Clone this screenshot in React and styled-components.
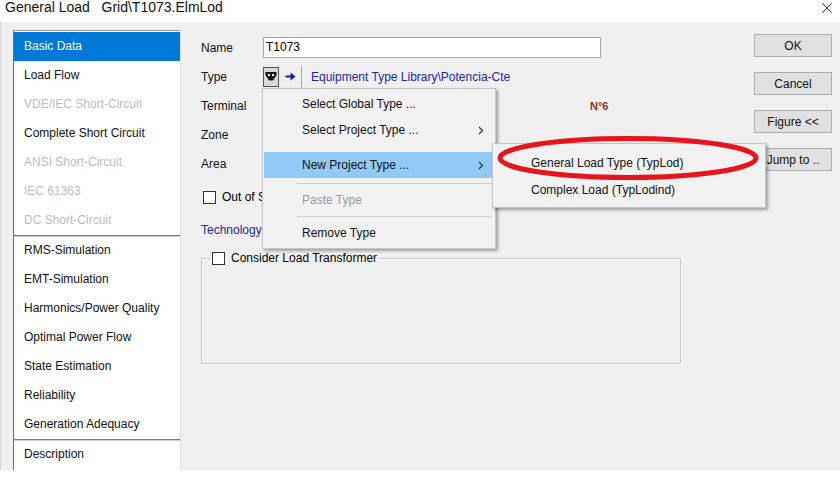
import React from "react";
import styled, { createGlobalStyle } from "styled-components";

const Global = createGlobalStyle`
  html, body { margin: 0; padding: 0; background: #ffffff; }
  body { font-family: "Liberation Sans", Arial, sans-serif; font-size: 12px; color: #000; }
  * { box-sizing: border-box; }
`;

const Window = styled.div`
  position: relative;
  width: 840px;
  height: 470px;
  display: flex;
  flex-direction: column;
`;

const TitleBar = styled.div`
  height: 22px;
  display: flex;
  justify-content: space-between;
  align-items: flex-start;
  padding: 0 8px 0 5px;
  background: #fff;
`;

const Title = styled.div`
  font-size: 14px;
  line-height: 15px;
  color: #111;
  white-space: pre;
`;

const Close = styled.div`
  padding-top: 3px;
  display: flex;
`;

const Body = styled.div`
  flex: 1;
  display: flex;
  background: #f0f0f0;
  padding: 8px 0 0 12px;
  border-left: 1px solid #d6d6d6;
`;

const Sidebar = styled.div`
  width: 168px;
  background: #fff;
  border-left: 1px solid #6e6e6e;
  border-top: 1px solid #9a9a9a;
  border-right: 1px solid #e2e2e2;
  padding-top: 1px;
  display: flex;
  flex-direction: column;
`;

const NavItem = styled.div`
  height: 29px;
  line-height: 29px;
  padding-left: 10px;
  font-size: 12px;
  white-space: nowrap;
  color: ${p => (p.$selected ? "#ffffff" : p.$disabled ? "#bdbdbd" : "#111")};
  background: ${p => (p.$selected ? "#0078d7" : "transparent")};
`;

const NavDivider = styled.div`
  height: 2px;
  background: #7a7a7a;
  border-bottom: 1px solid #d0d0d0;
  margin-bottom: -1px;
`;

const Content = styled.div`
  flex: 1;
  padding: 3px 0 0 20px;
  display: flex;
  flex-direction: column;
`;

const FieldRow = styled.div`
  height: 29px;
  display: flex;
  align-items: center;
`;

const Label = styled.div`
  width: 62px;
  color: #111;
`;

const TextInput = styled.div`
  width: 338px;
  height: 21px;
  background: #fff;
  border: 1px solid #a9a9a9;
  padding-left: 2px;
  line-height: 19px;
`;

const TypeControls = styled.div`
  display: flex;
  align-items: center;
  height: 22px;
`;

const IconButton = styled.div`
  width: 16px;
  height: 20px;
  display: flex;
  align-items: center;
  justify-content: center;
  margin-right: ${p => p.$gap || 0}px;
  border: ${p => (p.$focused ? "1px solid #555" : "1px solid transparent")};
  background: ${p => (p.$focused ? "#dadada" : "transparent")};
`;

const VSep = styled.div`
  width: 1px;
  height: 22px;
  background: #a8a8a8;
  margin: 0 9px 0 3px;
`;

const LinkText = styled.div`
  color: #2424a8;
  white-space: nowrap;
`;

const TerminalValue = styled.div`
  margin-left: 327px;
  color: #a4282a;
  font-weight: bold;
  font-size: 11px;
`;

const CheckRow = styled.label`
  height: 38px;
  display: flex;
  align-items: center;
  gap: 6px;
  padding-left: 2px;
`;

const Box = styled.span`
  width: 13px;
  height: 13px;
  background: #fff;
  border: 1px solid #333;
  display: inline-block;
  flex: none;
`;

const TechRow = styled.div`
  height: 28px;
  line-height: 28px;
  color: #2424a0;
`;

const GroupBox = styled.fieldset`
  width: 480px;
  height: 114px;
  margin: 6px 0 0 0;
  padding: 0;
  border: 1px solid #c8c8c8;
  box-shadow: inset 1px 1px 0 #fff, 1px 1px 0 #fff;
`;

const Legend = styled.legend`
  margin-left: 8px;
  padding: 0 2px;
  display: flex;
  align-items: center;
  gap: 6px;
  height: 16px;
`;

const ButtonColumn = styled.div`
  width: 78px;
  margin-right: 8px;
  padding-top: 4px;
  display: flex;
  flex-direction: column;
  gap: 15px;
`;

const Button = styled.div`
  height: 23px;
  border: 1px solid #adadad;
  background: #e1e1e1;
  display: flex;
  align-items: center;
  justify-content: center;
  color: #111;
`;

const Menu = styled.div`
  position: absolute;
  left: ${p => p.$left}px;
  top: ${p => p.$top}px;
  width: ${p => p.$width}px;
  background: #f2f2f2;
  border: 1px solid #c6c6c6;
  box-shadow: 2px 2px 3px rgba(0, 0, 0, 0.35);
  padding: ${p => p.$pad};
  display: flex;
  flex-direction: column;
`;

const MenuItem = styled.div`
  height: ${p => p.$h || 26}px;
  margin: 0 1px;
  margin-top: ${p => p.$mt || 0}px;
  padding: 0 10px 0 ${p => p.$indent}px;
  display: flex;
  align-items: center;
  justify-content: space-between;
  white-space: nowrap;
  color: ${p => (p.$disabled ? "#9a9a9a" : "#111")};
  background: ${p => (p.$active ? "#91c9f7" : "transparent")};
`;

const MenuSep = styled.div`
  height: ${p => p.$h}px;
  display: flex;
  align-items: center;
  padding: 0 3px 0 34px;
  &::after {
    content: "";
    flex: 1;
    height: 1px;
    background: #cfcfcf;
  }
`;

const Annotation = styled.svg`
  position: absolute;
  left: 495px;
  top: 135px;
  pointer-events: none;
`;

const Chevron = () => (
  <svg width="6" height="9" viewBox="0 0 6 9">
    <path d="M1 1 L4.5 4.5 L1 8" fill="none" stroke="#333" strokeWidth="1.2" />
  </svg>
);

const sidebarTop = [
  { t: "Basic Data", s: true },
  { t: "Load Flow" },
  { t: "VDE/IEC Short-Circuit", d: true },
  { t: "Complete Short Circuit" },
  { t: "ANSI Short-Circuit", d: true },
  { t: "IEC 61363", d: true },
  { t: "DC Short-Circuit", d: true },
];
const sidebarMid = [
  "RMS-Simulation",
  "EMT-Simulation",
  "Harmonics/Power Quality",
  "Optimal Power Flow",
  "State Estimation",
  "Reliability",
  "Generation Adequacy",
];

export default function App() {
  return (
    <>
      <Global />
      <Window>
        <TitleBar>
          <Title>{"General Load   Grid\\T1073.ElmLod"}</Title>
          <Close>
            <svg width="10" height="10" viewBox="0 0 10 10">
              <path d="M0.5 0.5 L9.5 9.5 M9.5 0.5 L0.5 9.5" stroke="#222" strokeWidth="1" />
            </svg>
          </Close>
        </TitleBar>
        <Body>
          <Sidebar>
            {sidebarTop.map(i => (
              <NavItem key={i.t} $selected={i.s} $disabled={i.d}>{i.t}</NavItem>
            ))}
            <NavDivider />
            {sidebarMid.map(t => (
              <NavItem key={t}>{t}</NavItem>
            ))}
            <NavDivider />
            <NavItem>Description</NavItem>
          </Sidebar>
          <Content>
            <FieldRow>
              <Label>Name</Label>
              <TextInput>T1073</TextInput>
            </FieldRow>
            <FieldRow>
              <Label>Type</Label>
              <TypeControls>
                <IconButton $focused $gap={3}>
                  <svg width="12" height="11" viewBox="0 0 12 11">
                    <path d="M0.5 1 H11.5 V4 L8 9.5 H4 L0.5 4 Z" fill="#111" />
                    <rect x="3" y="3" width="2" height="2" fill="#fff" />
                    <rect x="7" y="3" width="2" height="2" fill="#fff" />
                  </svg>
                </IconButton>
                <IconButton>
                  <svg width="11" height="9" viewBox="0 0 11 9">
                    <path d="M0.5 4.5 H7" stroke="#1a1ab8" strokeWidth="2" />
                    <path d="M5.5 0.5 L10.5 4.5 L5.5 8.5 Z" fill="#1a1ab8" />
                  </svg>
                </IconButton>
                <VSep />
                <LinkText>{"Equipment Type Library\\Potencia-Cte"}</LinkText>
              </TypeControls>
            </FieldRow>
            <FieldRow>
              <Label>Terminal</Label>
              <TerminalValue>N°6</TerminalValue>
            </FieldRow>
            <FieldRow>
              <Label>Zone</Label>
            </FieldRow>
            <FieldRow>
              <Label>Area</Label>
            </FieldRow>
            <CheckRow>
              <Box />
              <span>Out of Service</span>
            </CheckRow>
            <TechRow>Technology</TechRow>
            <GroupBox>
              <Legend>
                <Box />
                <span>Consider Load Transformer</span>
              </Legend>
            </GroupBox>
          </Content>
          <ButtonColumn>
            <Button>OK</Button>
            <Button>Cancel</Button>
            <Button>Figure &lt;&lt;</Button>
            <Button>Jump to ..</Button>
          </ButtonColumn>
        </Body>

        <Menu $left={262} $top={88} $width={234} $pad="2px 0 3px 0">
          <MenuItem $indent={38}>Select Global Type ...</MenuItem>
          <MenuItem $indent={38}>
            <span>Select Project Type ...</span>
            <Chevron />
          </MenuItem>
          <MenuItem $indent={38} $active $mt={9}>
            <span>New Project Type ...</span>
            <Chevron />
          </MenuItem>
          <MenuSep $h={10} />
          <MenuItem $indent={38} $h={24} $disabled>Paste Type</MenuItem>
          <MenuSep $h={9} />
          <MenuItem $indent={38} $h={24}>Remove Type</MenuItem>
        </Menu>

        <Menu $left={492} $top={143} $width={274} $pad="5px 0 4px 0">
          <MenuItem $indent={37} $h={27}>General Load Type (TypLod)</MenuItem>
          <MenuItem $indent={37} $h={27}>Complex Load (TypLodind)</MenuItem>
        </Menu>

        <Annotation width="266" height="46" viewBox="0 0 266 46">
          <ellipse cx="133" cy="23" rx="128" ry="19.5" fill="none" stroke="#e8141c" strokeWidth="5" />
        </Annotation>
      </Window>
    </>
  );
}
